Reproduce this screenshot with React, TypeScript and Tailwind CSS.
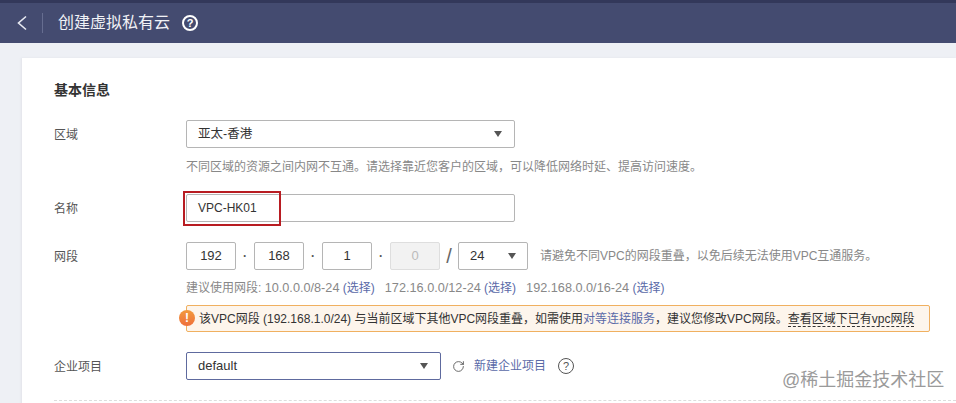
import { Fragment } from "react";
import { RotateCw } from "lucide-react";

const font = { fontFamily: '"Liberation Sans", "Noto Sans CJK SC", sans-serif' };

function Caret() {
  return <span className="h-0 w-0 border-x-[4px] border-t-[6px] border-x-transparent border-t-[#555]" />;
}

function Help({ dark }: { dark?: boolean }) {
  return (
    <span
      className={
        dark
          ? "flex h-[16px] w-[16px] items-center justify-center rounded-full border-[1.5px] border-[#555] text-[11px] text-[#555]"
          : "flex h-[16px] w-[16px] items-center justify-center rounded-full border-2 border-white text-[11px] font-bold text-white"
      }
    >
      ?
    </span>
  );
}

function Row({ label, children, className }: { label: string; children: React.ReactNode; className?: string }) {
  return (
    <div className={`flex items-center ${className ?? ""}`}>
      <div className="w-[132px] shrink-0 pt-[2px] text-[12px] text-[#555]">{label}</div>
      {children}
    </div>
  );
}

const octets = [
  { v: "192" },
  { v: "168" },
  { v: "1" },
  { v: "0", off: true },
];

export default function App() {
  return (
    <div className="relative h-[403px] w-[956px] overflow-hidden bg-[#eef0f5]" style={font}>
      {/* header */}
      <div className="h-[43px] border-t-[3px] border-[#33385a] bg-[#444b70] flex items-center text-white">
        <svg width="12" height="16" viewBox="0 0 12 16" fill="none" className="ml-[16px]">
          <path d="M10 1.5 2.5 8l7.5 6.5" stroke="#e8eaf2" strokeWidth="1.6" />
        </svg>
        <span className="ml-[14px] h-[20px] w-px bg-[#666d90]" />
        <span className="ml-[15px] text-[16px] text-[#f1f2f6]">创建虚拟私有云</span>
        <span className="ml-[12px]">
          <Help />
        </span>
      </div>

      {/* card */}
      <div className="relative ml-[22px] mt-[15px] h-[400px] bg-white pl-[32px] pr-[26px] pt-[24px] shadow-[-1px_0_2px_#e2e4ea]">
        <h2 className="text-[14px] font-bold leading-[17px] text-[#333]">基本信息</h2>

        <Row label="区域" className="mt-[21px]">
          <div className="flex h-[28px] w-[329px] items-center justify-between rounded-[2px] border border-[#b5b5b5] pl-[11px] pr-[12px] text-[12.5px] text-[#333]">
            亚太-香港
            <Caret />
          </div>
        </Row>
        <p className="ml-[132px] mt-[12px] text-[12px] leading-[15px] text-[#888]">
          不同区域的资源之间内网不互通。请选择靠近您客户的区域，可以降低网络时延、提高访问速度。
        </p>

        <Row label="名称" className="mt-[19px]">
          <div className="flex h-[28px] w-[329px] items-center rounded-[2px] border border-[#b5b5b5] pl-[11px] text-[12px] text-[#333]">
            VPC-HK01
          </div>
        </Row>

        <Row label="网段" className="mt-[20px]">
          {octets.map((o, i) => (
            <Fragment key={i}>
              <div
                className={
                  o.off
                    ? "flex h-[28px] w-[50px] items-center justify-center rounded-[2px] border border-[#dedede] bg-[#f2f2f2] text-[13px] text-[#bbb]"
                    : "flex h-[28px] w-[50px] items-center justify-center rounded-[2px] border border-[#b5b5b5] text-[13px] text-[#333]"
                }
              >
                {o.v}
              </div>
              {i < 3 && <span className="w-[18px] text-center text-[12px] font-bold leading-none text-[#555]">·</span>}
            </Fragment>
          ))}
          <span className="w-[18px] text-center text-[20px] font-light leading-none text-[#666]">/</span>
          <div className="flex h-[28px] w-[70px] items-center justify-between rounded-[2px] border border-[#b5b5b5] pl-[11px] pr-[11px] text-[13px] text-[#333]">
            24
            <Caret />
          </div>
          <span className="ml-[12px] text-[12px] text-[#888]">请避免不同VPC的网段重叠，以免后续无法使用VPC互通服务。</span>
        </Row>

        <p className="ml-[132px] mt-[11px] flex gap-[10px] text-[12px] leading-[15px] text-[#888]">
          <span>
            建议使用网段: <span className="text-[12.7px]">10.0.0.0/8-24</span> <span className="text-[#5a6aa8]">(选择)</span>
          </span>
          <span>
            <span className="text-[12.7px]">172.16.0.0/12-24</span> <span className="text-[#5a6aa8]">(选择)</span>
          </span>
          <span>
            <span className="text-[12.7px]">192.168.0.0/16-24</span> <span className="text-[#5a6aa8]">(选择)</span>
          </span>
        </p>

        <div className="relative ml-[132px] mt-[9px] flex h-[27px] w-[744px] items-center rounded-[2px] border border-[#f0b060] bg-[#fdf5ec] pl-[12px] text-[12px] text-[#333]">
          <span className="absolute left-[-8px] top-[4px] flex h-[16px] w-[16px] items-center justify-center rounded-full bg-gradient-to-b from-[#f29a3c] to-[#ee6f3c] text-[12px] font-bold text-white">
            !
          </span>
          <span>
            该VPC网段 (192.168.1.0/24) 与当前区域下其他VPC网段重叠，如需使用
            <span className="text-[#5a6aa8]">对等连接服务</span>，建议您修改VPC网段。
            <span className="border-b border-dashed border-[#333]">查看区域下已有vpc网段</span>
          </span>
        </div>

        <Row label="企业项目" className="mt-[20px]">
          <div className="flex h-[28px] w-[255px] items-center justify-between rounded-[2px] border border-[#5e6a9e] pl-[11px] pr-[12px] text-[13px] text-[#333]">
            default
            <Caret />
          </div>
          <RotateCw size={13} strokeWidth={1.6} className="ml-[11px] text-[#555]" />
          <span className="ml-[9px] text-[12px] text-[#5a6aa8]">新建企业项目</span>
          <span className="ml-[12px]">
            <Help dark />
          </span>
        </Row>

        <div className="mt-[20px] mr-[-26px] border-t border-dashed border-[#ddd]" />

        {/* highlight drawn over the name field */}
        <div className="absolute left-[161px] top-[133px] h-[35px] w-[98px] border-2 border-[#b81c22]" />
      </div>

      {/* watermark */}
      <div className="absolute left-[782px] top-[367px] text-[18px] text-[#9a9a9a]">@稀土掘金技术社区</div>
    </div>
  );
}
